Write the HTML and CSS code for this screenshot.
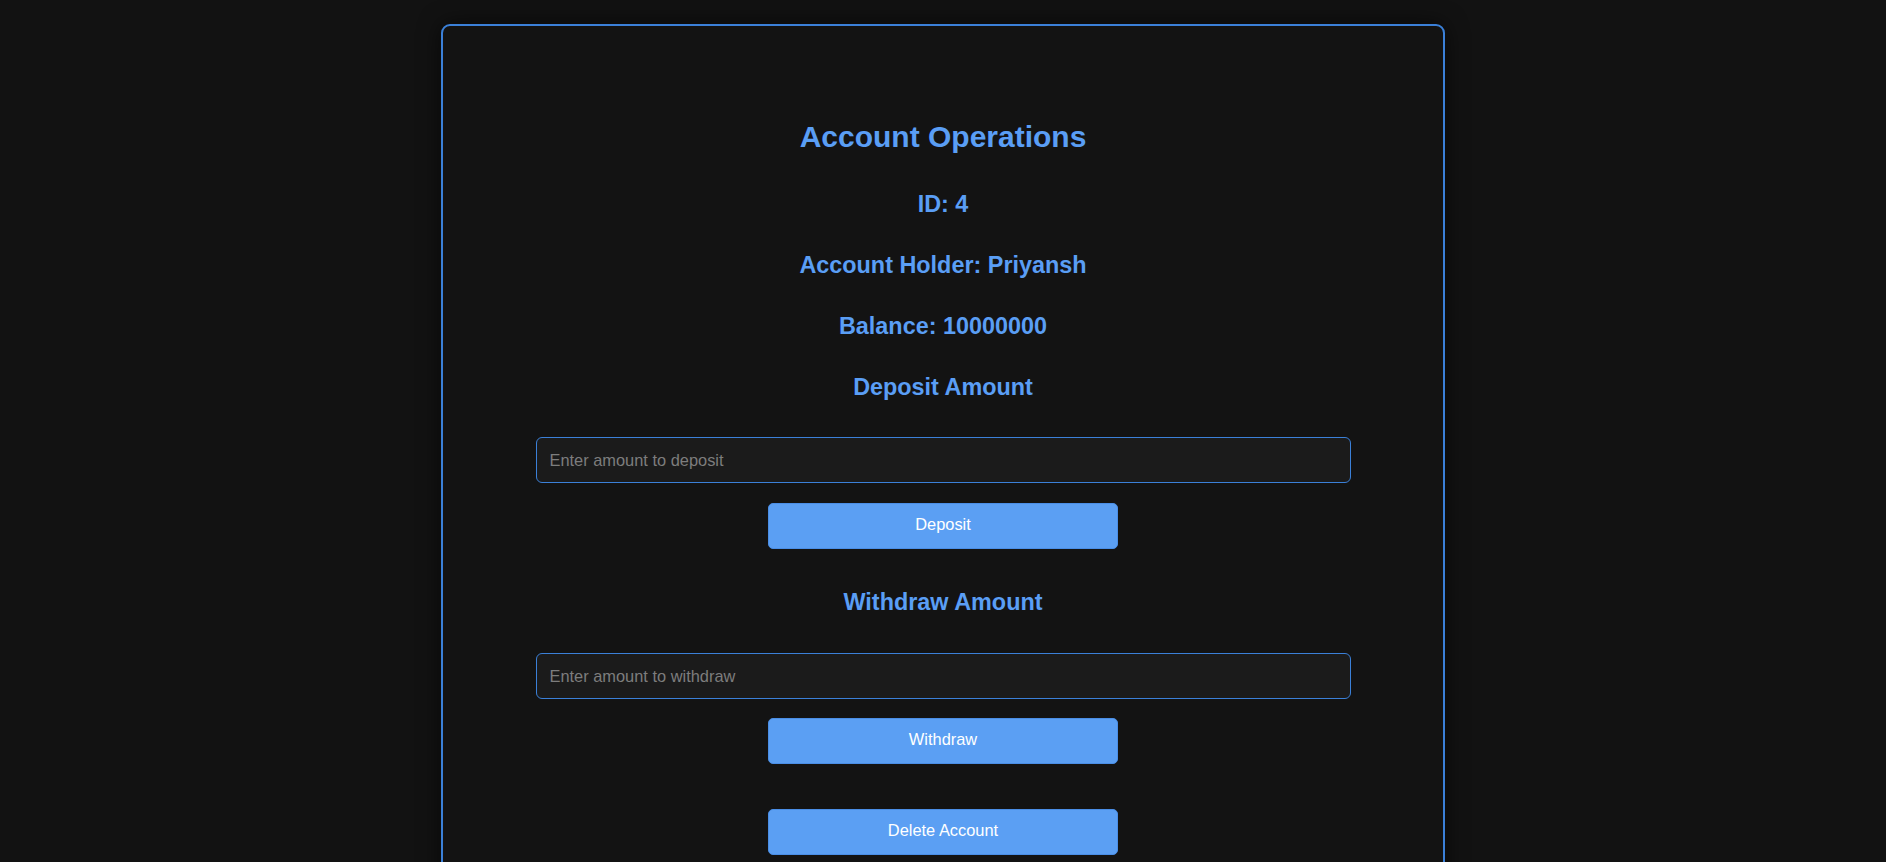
FILE: index.html
```html
<!DOCTYPE html>
<html lang="en">
<head>
<meta charset="utf-8">
<title>Account Operations</title>
<link rel="stylesheet" href="styles.css">
</head>
<body>
  <main class="card">
    <h2 class="title">Account Operations</h2>
    <h3 class="info">ID: 4</h3>
    <h3 class="info">Account Holder: Priyansh</h3>
    <h3 class="info">Balance: 10000000</h3>
    <h3 class="info section">Deposit Amount</h3>
    <input class="amount" type="number" placeholder="Enter amount to deposit">
    <button class="btn btn-deposit" type="button">Deposit</button>
    <h3 class="info section section-2">Withdraw Amount</h3>
    <input class="amount" type="number" placeholder="Enter amount to withdraw">
    <button class="btn btn-withdraw" type="button">Withdraw</button>
    <button class="btn btn-delete" type="button">Delete Account</button>
  </main>
</body>
</html>
```

FILE: styles.css
```css
html, body {
  margin: 0;
  padding: 0;
}

body {
  background: #121212;
  font-family: "Liberation Sans", Arial, sans-serif;
  overflow: hidden;
}

.card {
  box-sizing: border-box;
  width: 1004px;
  margin: 24px auto 0;
  padding: 94px 0 40px;
  background: #131313;
  border: 2px solid #3b80d8;
  border-radius: 9px;
  box-shadow: 0 0 22px rgba(0, 0, 0, 0.6);
  display: flex;
  flex-direction: column;
  align-items: center;
  min-height: 900px;
}

.title {
  margin: 0 0 37px;
  font-size: 30px;
  line-height: 34px;
  font-weight: 700;
  color: #5a9ef5;
}

.info {
  margin: 0 0 34px;
  font-size: 23.4px;
  line-height: 27px;
  font-weight: 700;
  color: #5a9ef5;
}

.section {
  margin-bottom: 36px;
}

.section-2 {
  margin-bottom: 37px;
}

.amount {
  box-sizing: border-box;
  width: 815px;
  height: 46px;
  margin: 0 0 20px;
  padding: 0 13px;
  background: #1b1b1b;
  border: 1px solid #3b80d8;
  border-radius: 6px;
  color: #ddd;
  font-family: "Liberation Sans", Arial, sans-serif;
  font-size: 16.4px;
  outline: none;
}

.amount::placeholder {
  color: #7d7d7d;
}

.btn {
  box-sizing: border-box;
  width: 350px;
  height: 46px;
  padding: 0 0 3px;
  background: #5b9ff3;
  border: 1px solid #4a8ee6;
  border-radius: 5px;
  color: #ffffff;
  font-family: "Liberation Sans", Arial, sans-serif;
  font-size: 16.4px;
  cursor: pointer;
}

.btn-deposit {
  margin-bottom: 40px;
}

.btn-withdraw {
  margin-top: -1px;
  margin-bottom: 45px;
}
```
